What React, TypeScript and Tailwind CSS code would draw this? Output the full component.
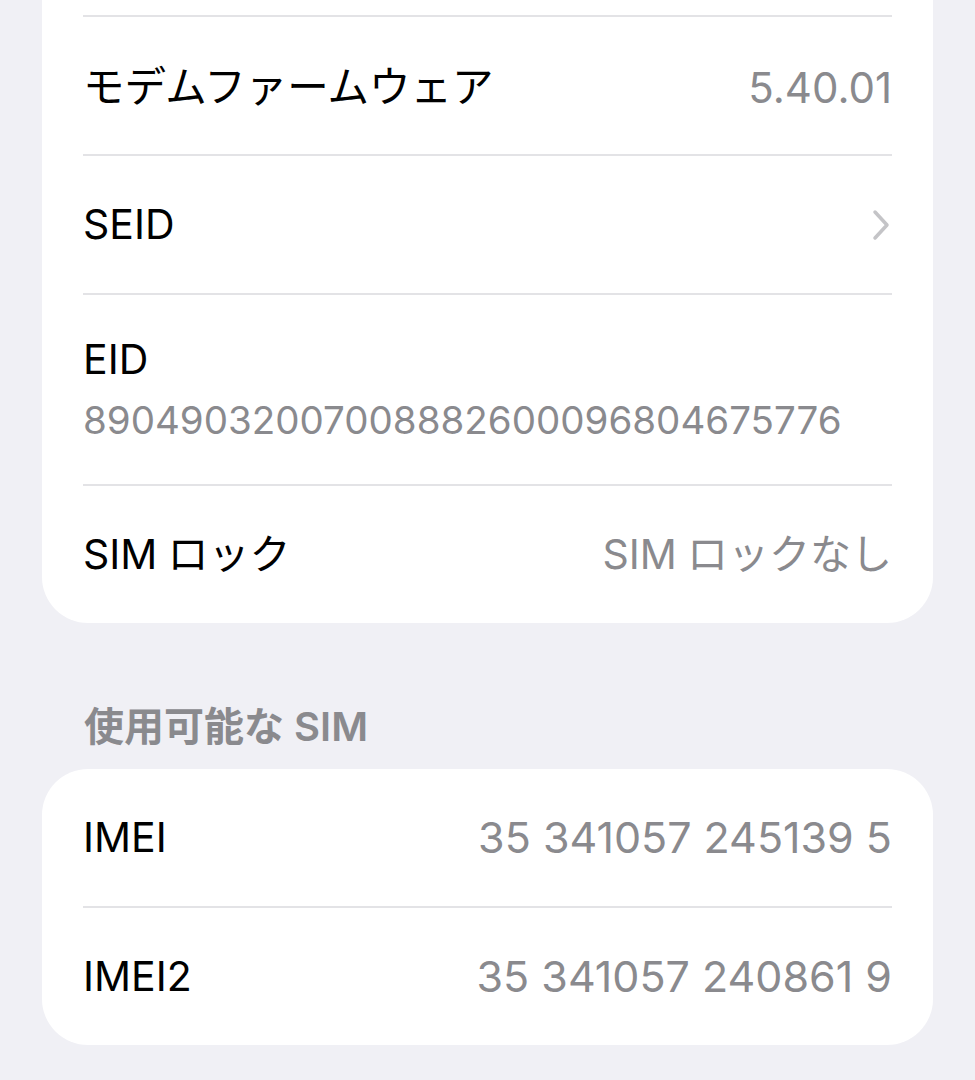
import React from 'react'

const font = { fontFamily: 'Inter, "Noto Sans CJK JP", sans-serif' }

const Divider: React.FC = () => <div className="h-[2px] bg-[#e3e3e6]" />

const Row: React.FC<{ label: string; value?: string; chevron?: boolean; num?: boolean }> = ({ label, value, chevron, num }) => (
  <div className="flex h-[137px] items-center justify-between">
    <span className="text-[41px] text-black">{label}</span>
    {value && <span className={num ? 'text-[43px] text-[#8a8a8e]' : 'text-[41px] text-[#8a8a8e]'}>{value}</span>}
    {chevron && (
      <svg width="20" height="32" viewBox="0 0 20 32" className="mr-[1px]">
        <path d="M4 3 L16 16 L4 29" fill="none" stroke="#c4c4c7" strokeWidth="3.5" strokeLinecap="round" strokeLinejoin="round" />
      </svg>
    )}
  </div>
)

const App: React.FC = () => {
  return (
    <div className="min-h-[1080px] w-[975px] overflow-hidden bg-[#f0f0f5]" style={font}>
      <div className="mx-[42px] rounded-b-[46px] bg-white px-[41px]">
        <div className="h-[15px]" />
        <Divider />
        <div className="flex h-[137px] items-center justify-between pt-[4px]">
          <span className="text-[41.5px] text-black">モデムファームウェア</span>
          <span className="text-[42px] text-[#8a8a8e]">5.40.01</span>
        </div>
        <Divider />
        <Row label="SEID" chevron />
        <Divider />
        <div className="flex h-[189px] flex-col justify-center">
          <span className="text-[41px] leading-[52px] text-black">EID</span>
          <span className="mt-[9px] text-[38.5px] leading-[52px] text-[#8a8a8e]">89049032007008882600096804675776</span>
        </div>
        <Divider />
        <Row label={'SIM\u2005ロック'} value={'SIM\u2005ロックなし'} />
      </div>

      <div className="px-[84px] pt-[74px] pb-[12px]">
        <span className="text-[40px] font-semibold text-[#8a8a8e]">使用可能な SIM</span>
      </div>

      <div className="mx-[42px] rounded-[46px] bg-white px-[41px]">
        <Row label="IMEI" value="35 341057 245139 5" num />
        <Divider />
        <Row label="IMEI2" value="35 341057 240861 9" num />
      </div>
    </div>
  )
}

export default App
